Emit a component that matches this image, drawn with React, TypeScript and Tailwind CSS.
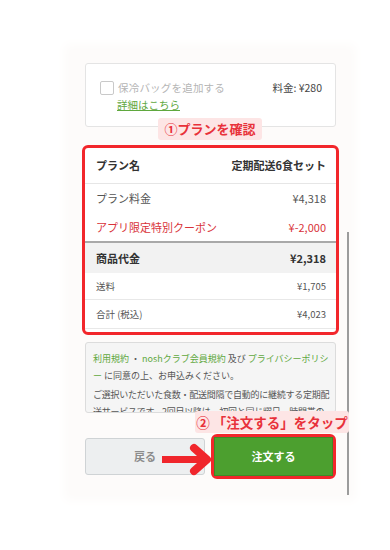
import React from 'react'

const rowBase = 'flex items-center justify-between pl-[11px] pr-[10px]'

const App = () => {
  return (
    <div className="relative w-[390px] h-[550px] overflow-hidden bg-white font-['Noto_Sans_CJK_JP','Noto_Sans',sans-serif] text-[#333]">
      {/* faint page panel */}
      <div className="relative ml-[70px] mt-[50px] w-[280px] h-[445px] bg-[#fdfbfa] shadow-[0_0_10px_6px_#fdfbfa] pt-[13px] pl-[15px] pr-[14px]">
        {/* cooler bag card */}
        <div className="h-[64px] border border-[#e4e4e4] rounded-[3px] bg-white pt-[16px] pl-[14px] pr-[13px]">
          <div className="flex items-center justify-between h-[16px]">
            <div className="flex items-center gap-[4px]">
              <span className="w-[14px] h-[14px] border-[1.5px] border-[#c9c9c9] rounded-[2px] bg-white" />
              <span className="text-[10.5px] text-[#b5b5b5] tracking-[0.2px]">保冷バッグを追加する</span>
            </div>
            <span className="text-[10.5px] text-[#444]">料金: ¥280</span>
          </div>
          <div className="mt-[1px] pl-[17px] text-[10.5px] text-[#5fa83e] underline leading-[16px]">詳細はこちら</div>
        </div>

        {/* plan table, outlined in red */}
        <div className="mt-[18px] -mx-[3px] border-[3px] border-[#f2262b] rounded-[6px] bg-white overflow-hidden">
          <div className={`${rowBase} h-[36px] border-b border-[#e6e6e6] text-[11px] font-bold text-[#333]`}>
            <span>プラン名</span>
            <span>定期配送6食セット</span>
          </div>
          <div className={`${rowBase} h-[29px] text-[11px] text-[#555]`}>
            <span>プラン料金</span>
            <span>¥4,318</span>
          </div>
          <div className={`${rowBase} h-[30px] text-[11px] text-[#d9333a] border-b-[2px] border-[#a9a9a9]`}>
            <span>アプリ限定特別クーポン</span>
            <span>¥-2,000</span>
          </div>
          <div className={`${rowBase} h-[30px] bg-[#f2f2f2] text-[11px] font-bold text-[#333]`}>
            <span>商品代金</span>
            <span>¥2,318</span>
          </div>
          <div className={`${rowBase} h-[27px] border-b border-[#e8e8e8] text-[9.5px] text-[#555]`}>
            <span>送料</span>
            <span>¥1,705</span>
          </div>
          <div className={`${rowBase} h-[29px] border-b border-[#e8e8e8] text-[9.5px] text-[#555]`}>
            <span>合計 (税込)</span>
            <span>¥4,023</span>
          </div>
          <div className="h-[3px]" />
        </div>

        {/* terms */}
        <div className="mt-[7px] h-[71px] overflow-hidden border border-[#dcdcdc] rounded-[3px] bg-[#f5f5f5] px-[7px] pt-[7px] text-[9px] leading-[17px] text-[#555]">
          <div className="whitespace-nowrap">
            <span className="text-[#5fa83e]">利用規約</span> ・ <span className="text-[#5fa83e]">noshクラブ会員規約</span> 及び <span className="text-[#5fa83e]">プライバシーポリシ</span>
          </div>
          <div className="whitespace-nowrap">
            <span className="text-[#5fa83e]">ー</span> に同意の上、お申込みください。
          </div>
          <div className="mt-[2px] whitespace-nowrap tracking-[-0.25px]">ご選択いただいた食数・配送間隔で自動的に継続する定期配</div>
          <div className="whitespace-nowrap tracking-[-0.25px]">送サービスです。2回目以降は、初回と同じ曜日・時間帯の</div>
        </div>

        {/* buttons */}
        <div className="mt-[21px] flex gap-[6px]">
          <button className="mt-[4px] w-[120px] h-[37px] border border-[#cfd3d5] rounded-[3px] bg-[#edeff0] text-[11px] font-bold text-[#8c8c8c]">
            戻る
          </button>
          <div className="w-[125px] h-[45px] border-[3px] border-[#f2262b] rounded-[6px] flex">
            <button className="flex-1 bg-[#4c9f2f] border border-[#3f8a26] text-[11px] font-bold text-white">
              注文する
            </button>
          </div>
        </div>

        {/* scroll indicator */}
        <div className="absolute left-[277px] top-[182px] w-[2px] h-[263px] bg-[#9c9c9c]" />
      </div>

      {/* annotation: step 1 */}
      <div className="absolute left-[158px] top-[118px] w-[104px] h-[22px] rounded-[3px] bg-[#fde5e5] flex items-center justify-center text-[13px] font-bold text-[#e8313a]">
        ①プランを確認
      </div>

      {/* annotation: step 2 */}
      <div className="absolute left-[195px] top-[411px] w-[154px] h-[22px] rounded-[3px] bg-[#fde5e5] flex items-center justify-center text-[13.5px] font-bold text-[#e8313a] whitespace-nowrap">
        ② 「注文する」をタップ
      </div>

      {/* annotation arrow */}
      <svg className="absolute left-[158px] top-[443px]" width="56" height="33" viewBox="0 0 56 33">
        <line x1="4" y1="16.5" x2="44" y2="16.5" stroke="#f0262c" strokeWidth="7" />
        <polyline points="36,5 49,16.5 36,28" fill="none" stroke="#f0262c" strokeWidth="8" strokeLinecap="round" strokeLinejoin="round" />
      </svg>
    </div>
  )
}

export default App
